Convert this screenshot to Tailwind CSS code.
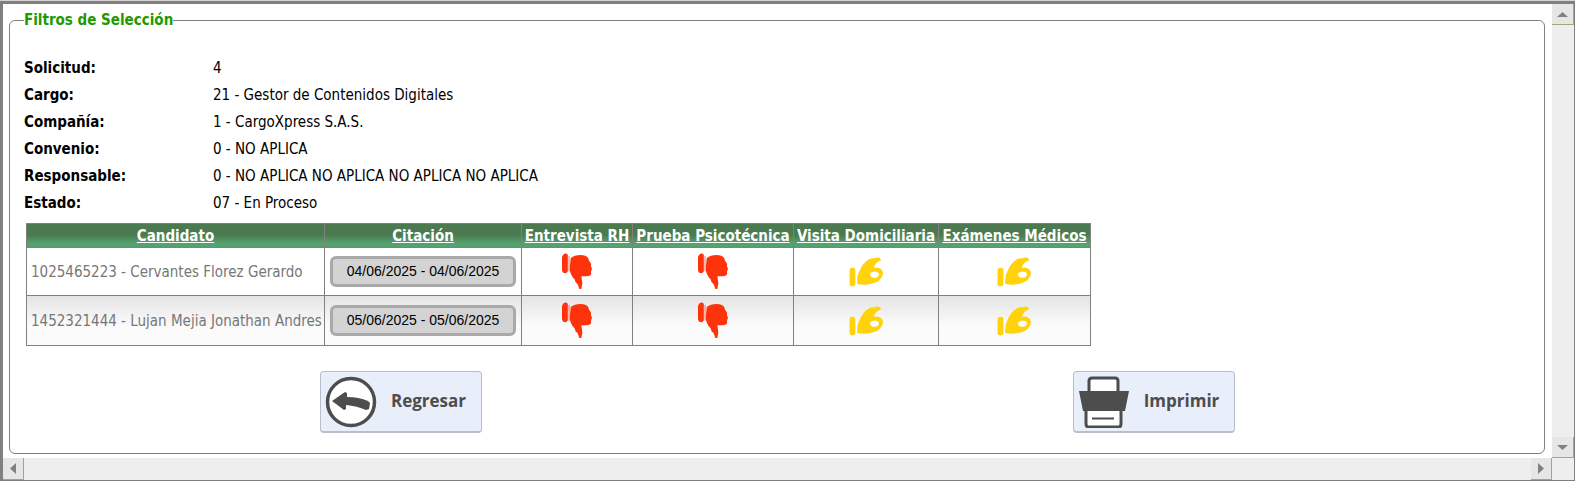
<!DOCTYPE html>
<html lang="es">
  <head>
    <meta charset="UTF-8" />
    <meta name="viewport" content="width=device-width, initial-scale=1.0" />
    <title>Filtros de Selección</title>
    <script src="https://cdn.jsdelivr.net/npm/@tailwindcss/browser@4"></script>
  </head>
  <body class="h-screen overflow-hidden bg-[#d4d4d4] pt-px font-['DejaVu_Sans_Condensed','DejaVu_Sans',sans-serif] text-[15px] text-black">
    <!-- thumbs shared by the table cells -->
    <svg class="hidden" xmlns="http://www.w3.org/2000/svg">
      <symbol id="thumb-down" viewBox="0 0 32 38">
        <path d="M1 2q3-3 5 0v17q-2 3-5 1l-1-2V4z" />
        <path d="M6.500 3h1.500v16H6.500z" opacity=".45" />
        <path d="M9 5q4-3 10-3 6 0 8 3l1 3 2 3v3l1 2-1 3v3q-2 2-5 2h-5l1 7-1 6h-2l-2-5-2-2-1-3-2-2-2-4q-1-2-1-6z" />
      </symbol>
      <symbol id="thumb-up" viewBox="0 0 36 31">
        <path d="M1 12q2-2 5 0l.5 2v15q-3 3-6 0V14z" />
        <path fill-rule="evenodd" d="M8.500 28q-1-8 3-15 3-7 8-10 3-2 6-1.500 4-1.500 6-.5 2 1 1 3-5 1-7 7 8-1 9.500 5 0 5-5 9-9 5-21.500 3zM26.500 15q-5 .5-5 3.500 1 3 5 3 4-.5 4.500-3.500-.5-3-4.500-3z" />
      </symbol>
    </svg>

    <div class="grid h-full grid-cols-[1fr_22px] grid-rows-[1fr_22px] border-t-3 border-r border-b border-l-3 border-[#808080] bg-white">
      <main class="flex min-w-0 pt-2 pr-[7px] pb-1 pl-[6px]">
        <fieldset class="flex min-w-0 flex-1 flex-col rounded-md border border-[#808080] px-[14px]">
          <legend class="leading-4 font-bold text-[#209a00]">Filtros de Selección</legend>

          <dl class="grid grid-cols-[189px_1fr] pt-[27px] leading-[27px]">
            <dt class="font-bold">Solicitud:</dt>
            <dd>4</dd>
            <dt class="font-bold">Cargo:</dt>
            <dd>21 - Gestor de Contenidos Digitales</dd>
            <dt class="font-bold">Compañía:</dt>
            <dd>1 - CargoXpress S.A.S.</dd>
            <dt class="font-bold">Convenio:</dt>
            <dd>0 - NO APLICA</dd>
            <dt class="font-bold">Responsable:</dt>
            <dd>0 - NO APLICA NO APLICA NO APLICA NO APLICA</dd>
            <dt class="font-bold">Estado:</dt>
            <dd>07 - En Proceso</dd>
          </dl>

          <table class="mt-[6px] ml-[2px] w-[1064px] table-fixed border-collapse border border-[#808080] whitespace-nowrap">
            <colgroup>
              <col class="w-[298px]" />
              <col class="w-[197px]" />
              <col class="w-[111px]" />
              <col class="w-[161px]" />
              <col class="w-[145px]" />
              <col class="w-[152px]" />
            </colgroup>
            <thead>
              <tr class="h-6 bg-linear-to-b from-[#4b7950] from-45% to-[#55a270] to-80% leading-5 text-white">
                <th class="border border-[#808080]"><a href="#" class="underline">Candidato</a></th>
                <th class="border border-[#808080]"><a href="#" class="underline">Citación</a></th>
                <th class="border border-[#808080]"><a href="#" class="underline">Entrevista RH</a></th>
                <th class="border border-[#808080]"><a href="#" class="underline">Prueba Psicotécnica</a></th>
                <th class="border border-[#808080]"><a href="#" class="underline">Visita Domiciliaria</a></th>
                <th class="border border-[#808080]"><a href="#" class="underline">Exámenes Médicos</a></th>
              </tr>
            </thead>
            <tbody>
              <tr class="h-12">
                <td class="border border-[#808080] pt-0.5 pl-1 text-[#777]">1025465223 - Cervantes Florez Gerardo</td>
                <td class="border border-[#808080] px-[5px]">
                  <button type="button" class="block h-[31px] w-full rounded-md border-3 border-[#a9a9a9] bg-[#d3d3d3] pb-0.5 font-['Liberation_Sans',sans-serif] text-sm">04/06/2025 - 04/06/2025</button>
                </td>
                <td class="border border-[#808080]"><svg class="mx-auto h-[37px] w-[31px] fill-[#ff330b]"><use href="#thumb-down" /></svg></td>
                <td class="border border-[#808080]"><svg class="mx-auto h-[37px] w-[31px] fill-[#ff330b]"><use href="#thumb-down" /></svg></td>
                <td class="border border-[#808080]"><svg class="mx-auto h-[30px] w-[35px] fill-[#ffd20a]"><use href="#thumb-up" /></svg></td>
                <td class="border border-[#808080]"><svg class="mx-auto h-[30px] w-[35px] fill-[#ffd20a]"><use href="#thumb-up" /></svg></td>
              </tr>
              <tr class="h-[50px] bg-linear-to-b from-[#e4e4e4] to-[#fbfbfb] to-60%">
                <td class="border border-[#808080] pt-0.5 pl-1 text-[#777]">1452321444 - Lujan Mejia Jonathan Andres</td>
                <td class="border border-[#808080] px-[5px]">
                  <button type="button" class="block h-[31px] w-full rounded-md border-3 border-[#a9a9a9] bg-[#d3d3d3] pb-0.5 font-['Liberation_Sans',sans-serif] text-sm">05/06/2025 - 05/06/2025</button>
                </td>
                <td class="border border-[#808080]"><svg class="mx-auto h-[37px] w-[31px] fill-[#ff330b]"><use href="#thumb-down" /></svg></td>
                <td class="border border-[#808080]"><svg class="mx-auto h-[37px] w-[31px] fill-[#ff330b]"><use href="#thumb-down" /></svg></td>
                <td class="border border-[#808080]"><svg class="mx-auto h-[30px] w-[35px] fill-[#ffd20a]"><use href="#thumb-up" /></svg></td>
                <td class="border border-[#808080]"><svg class="mx-auto h-[30px] w-[35px] fill-[#ffd20a]"><use href="#thumb-up" /></svg></td>
              </tr>
            </tbody>
          </table>

          <div class="mt-[25px] grid grid-cols-2 justify-items-center font-['Open_Sans',sans-serif] text-[17px] font-bold text-[#4d4d4d]">
            <button type="button" class="flex h-[62px] w-[162px] items-center rounded-sm border border-b-2 border-[#b9bfc9] bg-[#e8eefa] pl-1">
              <svg class="size-[52px]" viewBox="0 0 52 52">
                <circle cx="26" cy="26" r="23.500" fill="#fff" stroke="#4d4d4d" stroke-width="3.500" />
                <path d="M7 25 20 16l2 1v4q12 0 21 4l2 2-1 6-3 1q-9-4-20-5v4l-2 1z" fill="#4d4d4d" />
              </svg>
              <span class="flex-1 pb-0.5 text-center">Regresar</span>
            </button>
            <button type="button" class="flex h-[62px] w-[162px] items-center rounded-sm border border-b-2 border-[#b9bfc9] bg-[#e8eefa] pl-1">
              <svg class="size-[52px]" viewBox="0 0 52 52">
                <path d="M11 17V5q0-3 3-3h23q3 0 3 3v12" fill="#fff" stroke="#4d4d4d" stroke-width="3" />
                <path d="M8 34v14q0 3 3 3h29q3 0 3-3V34" fill="#fff" stroke="#4d4d4d" stroke-width="3" />
                <path d="M1 15h50l-4 20H5z" fill="#4d4d4d" />
                <path d="M14 42.500h22" stroke="#4d4d4d" stroke-width="2" />
              </svg>
              <span class="flex-1 pb-0.5 text-center">Imprimir</span>
            </button>
          </div>
        </fieldset>
      </main>

      <!-- vertical scrollbar -->
      <div class="flex flex-col justify-between bg-[#eee]">
        <button type="button" aria-label="Subir" class="flex h-[21px] items-center justify-center border-r border-b border-[#9cab7c] bg-[#e6e6e6]">
          <svg class="h-[5px] w-[11px] fill-[#808080]" viewBox="0 0 11 5"><path d="M0 5 5.500 0 11 5z" /></svg>
        </button>
        <button type="button" aria-label="Bajar" class="flex h-[21px] items-center justify-center border-r border-b border-[#9cab7c] bg-[#e6e6e6]">
          <svg class="h-[5px] w-[11px] fill-[#808080]" viewBox="0 0 11 5"><path d="M0 0h11L5.500 5z" /></svg>
        </button>
      </div>

      <!-- horizontal scrollbar -->
      <div class="flex justify-between bg-[#eee]">
        <button type="button" aria-label="Izquierda" class="flex w-[21px] items-center justify-center border-r border-b border-[#9cab7c] bg-[#e6e6e6]">
          <svg class="h-[11px] w-[6px] fill-[#808080]" viewBox="0 0 6 11"><path d="M6 0v11L0 5.500z" /></svg>
        </button>
        <button type="button" aria-label="Derecha" class="flex w-[21px] items-center justify-center border-r border-b border-[#9cab7c] bg-[#e6e6e6]">
          <svg class="h-[11px] w-[6px] fill-[#808080]" viewBox="0 0 6 11"><path d="M0 0v11l6-5.500z" /></svg>
        </button>
      </div>
      <div class="bg-[#eee]"></div>
    </div>
  </body>
</html>
